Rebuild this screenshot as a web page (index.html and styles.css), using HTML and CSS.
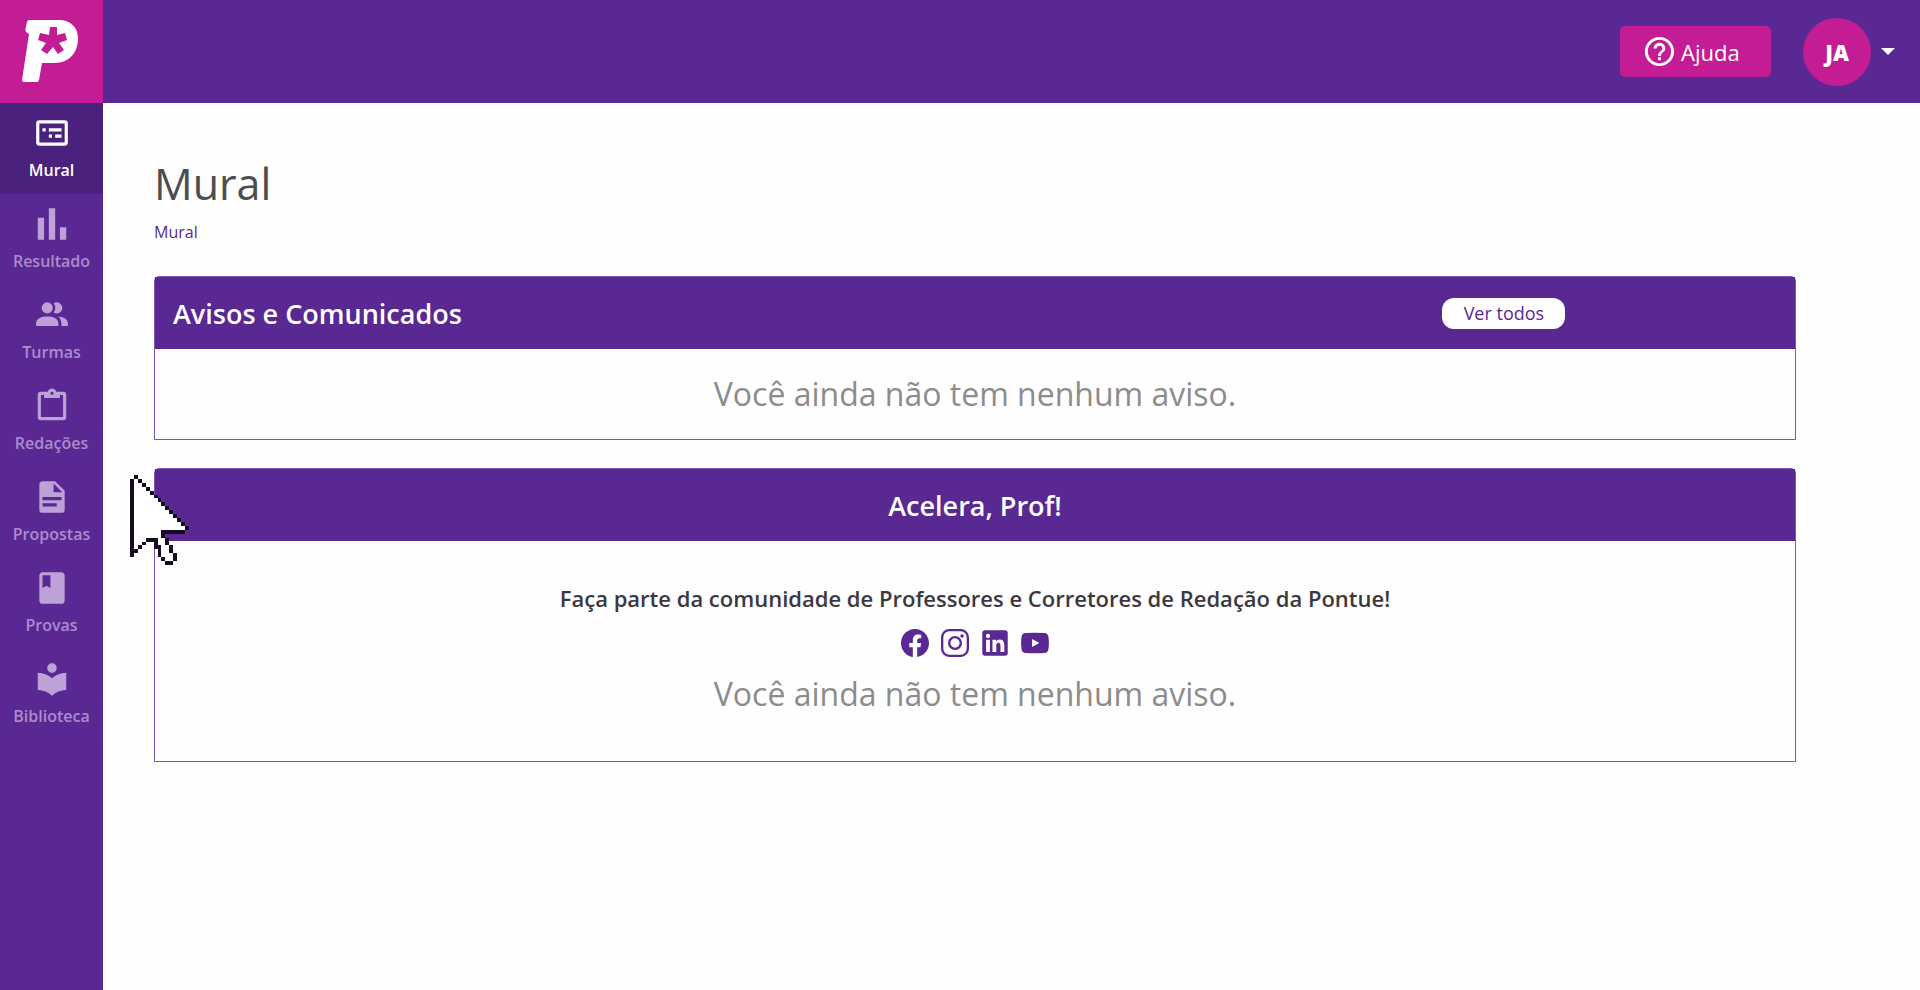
FILE: index.html
```html
<!DOCTYPE html>
<html lang="pt-BR">
<head>
<meta charset="UTF-8">
<meta name="viewport" content="width=device-width, initial-scale=1.0">
<title>Pontue - Mural</title>
<link rel="stylesheet" href="styles.css">
</head>
<body>

<aside class="sidebar">
    <a class="logo" href="#" aria-label="Pontue">
        <svg viewBox="0 0 75 80" aria-hidden="true">
            <path fill="#fff" d="M15 10H45C56 10 64 17 64 28C64 42 56 53 40 53H28L25 70Q24.500 72 23 72H10Q8 72 8 70L15 24L12 22Q11 21 11.500 19L13 12Q13.500 10 15 10Z"/>
            <path fill="#c41c94" d="M36 17H43V25L51 23L53 30L45 33L50 40L44 44L39 37L33 44L27 40L32 33L24 30L26 23L35 25Z"/>
        </svg>
    </a>
    <nav class="menu">
        <a class="menu-item active" href="#mural">
            <svg viewBox="0 0 24 24"><path d="M20 4H4a2 2 0 0 0-2 2v12a2 2 0 0 0 2 2h16a2 2 0 0 0 2-2V6a2 2 0 0 0-2-2m0 14H4V6h16v12M6 9h2v2H6V9m4 0h8v2h-8V9m0 4h2v2h-2v-2m4 0h4v2h-4v-2z"/></svg>
            <span>Mural</span>
        </a>
        <a class="menu-item" href="#resultado">
            <svg viewBox="0 0 24 24"><path d="M3 22V8h4v14H3M10 22V2h4v20h-4M17 22v-8h4v8h-4z"/></svg>
            <span>Resultado</span>
        </a>
        <a class="menu-item" href="#turmas">
            <svg viewBox="0 0 24 24"><path d="M16 17v2H2v-2s0-4 7-4 7 4 7 4m-3.500-9.500A3.500 3.500 0 1 0 9 11a3.500 3.500 0 0 0 3.500-3.500m3.440 5.500A5.320 5.320 0 0 1 18 17v2h4v-2s0-3.630-6.060-4M15 4a3.390 3.390 0 0 0-1.930.590 5 5 0 0 1 0 5.820A3.390 3.390 0 0 0 15 11a3.500 3.500 0 0 0 0-7z"/></svg>
            <span>Turmas</span>
        </a>
        <a class="menu-item" href="#redacoes">
            <svg viewBox="0 0 24 24"><path d="M19 3h-4.180C14.400 1.840 13.300 1 12 1s-2.400.840-2.820 2H5a2 2 0 0 0-2 2v14a2 2 0 0 0 2 2h14a2 2 0 0 0 2-2V5a2 2 0 0 0-2-2m-7 0a1 1 0 0 1 1 1 1 1 0 0 1-1 1 1 1 0 0 1-1-1 1 1 0 0 1 1-1M7 7h10V5h2v14H5V5h2v2z"/></svg>
            <span>Redações</span>
        </a>
        <a class="menu-item" href="#propostas">
            <svg viewBox="0 0 24 24"><path d="M13 9h5.500L13 3.500V9M6 2h8l6 6v12a2 2 0 0 1-2 2H6a2 2 0 0 1-2-2V4c0-1.110.890-2 2-2m9 16v-2H6v2h9m3-4v-2H6v2h12z"/></svg>
            <span>Propostas</span>
        </a>
        <a class="menu-item" href="#provas">
            <svg viewBox="0 0 24 24"><path d="M18 2H6c-1.100 0-2 .900-2 2v16c0 1.100.900 2 2 2h12c1.100 0 2-.900 2-2V4c0-1.100-.900-2-2-2zM6 4h5v8l-2.500-1.500L6 12V4z"/></svg>
            <span>Provas</span>
        </a>
        <a class="menu-item" href="#biblioteca">
            <svg viewBox="0 0 24 24"><path d="M12 11.550C9.640 9.350 6.480 8 3 8v11c3.480 0 6.640 1.350 9 3.550 2.360-2.190 5.520-3.550 9-3.550V8c-3.480 0-6.640 1.350-9 3.550zM12 8c1.660 0 3-1.340 3-3s-1.340-3-3-3-3 1.340-3 3 1.340 3 3 3z"/></svg>
            <span>Biblioteca</span>
        </a>
    </nav>
</aside>

<div class="page">
    <header class="top-bar">
        <button class="help-button" type="button">
            <svg viewBox="0 0 24 24" aria-hidden="true"><path d="M11 18h2v-2h-2v2zm1-16C6.480 2 2 6.480 2 12s4.480 10 10 10 10-4.480 10-10S17.520 2 12 2zm0 18c-4.410 0-8-3.590-8-8s3.590-8 8-8 8 3.590 8 8-3.590 8-8 8zm0-14c-2.210 0-4 1.790-4 4h2c0-1.100.900-2 2-2s2 .900 2 2c0 2-3 1.750-3 5h2c0-2.250 3-2.500 3-5 0-2.210-1.790-4-4-4z"/></svg>
            <span>Ajuda</span>
        </button>
        <button class="user-button" type="button">
            <span class="avatar">JA</span>
            <span class="caret"></span>
        </button>
    </header>

    <main class="content">
        <h1>Mural</h1>
        <a class="breadcrumb" href="#mural">Mural</a>

        <section class="card">
            <div class="card-header">
                <h2>Avisos e Comunicados</h2>
                <button class="see-all" type="button">Ver todos</button>
            </div>
            <div class="card-body">
                <p class="empty">Você ainda não tem nenhum aviso.</p>
            </div>
        </section>

        <section class="card">
            <div class="card-header centered">
                <h2>Acelera, Prof!</h2>
            </div>
            <div class="card-body community">
                <p class="invite">Faça parte da comunidade de Professores e Corretores de Redação da Pontue!</p>
                <div class="social">
                    <a href="#" aria-label="Facebook">
                        <svg viewBox="0 0 16 16"><path d="M16 8.049c0-4.446-3.582-8.050-8-8.050C3.580 0-.002 3.603-.002 8.050c0 4.017 2.926 7.347 6.750 7.951v-5.625h-2.030V8.050H6.750V6.275c0-2.017 1.195-3.131 3.022-3.131.876 0 1.791.157 1.791.157v1.980h-1.009c-.993 0-1.303.621-1.303 1.258v1.510h2.218l-.354 2.326H9.250V16c3.824-.604 6.750-3.934 6.750-7.951z"/></svg>
                    </a>
                    <a href="#" aria-label="Instagram">
                        <svg viewBox="0 0 24 24"><rect x="1" y="1" width="22" height="22" rx="6" fill="none" stroke="#592893" stroke-width="2"/><circle cx="12" cy="12" r="5" fill="none" stroke="#592893" stroke-width="2"/><circle cx="18" cy="6" r="1.500"/></svg>
                    </a>
                    <a href="#" aria-label="LinkedIn">
                        <svg viewBox="1 1 22 22"><path d="M20 2H4C2.900 2 2 2.900 2 4v16c0 1.100.900 2 2 2h16c1.100 0 2-.900 2-2V4c0-1.100-.900-2-2-2zM8 19H5V9.500h3V19zM6.500 8.200a1.700 1.700 0 1 1 0-3.400 1.700 1.700 0 0 1 0 3.400zM19.300 19h-3v-5c0-1.400-.500-2.100-1.500-2.100-1.100 0-1.800.800-1.800 2.100v5h-3V9.500h2.900v1.300c.500-.900 1.400-1.600 2.800-1.600 2.300 0 3.600 1.400 3.600 4.100V19z"/></svg>
                    </a>
                    <a href="#" aria-label="YouTube">
                        <svg viewBox="0 0 24 24"><path d="M4 3.500Q12 3 20 3.500Q23 3.700 23.500 6.500Q24.300 12 23.500 17.500Q23 20.300 20 20.500Q12 21 4 20.500Q1 20.300.500 17.500Q-.300 12 .500 6.500Q1 3.700 4 3.500zM9.500 8.500v7l6.200-3.500z"/></svg>
                    </a>
                </div>
                <p class="empty">Você ainda não tem nenhum aviso.</p>
            </div>
        </section>
    </main>
</div>

<svg class="cursor" viewBox="0 0 15 23" shape-rendering="crispEdges" aria-hidden="true">
    <path fill="#fff" d="M1 0H2V1H3V2H4V3H5V4H6V5H7V6H8V7H9V8H10V9H11V10H12V11H13V12H14V13H15V14H9V16H10V18H11V20H12V22H8V21H7V18H6V16H4V17H3V18H2V19H1V20H0V1H1Z"/>
    <path fill="#160a26" d="M0 1h1v20H0zM1 0h1v1H1zM2 1h1v1H2zM3 2h1v1H3zM4 3h1v1H4zM5 4h1v1H5zM6 5h1v1H6zM7 6h1v1H7zM8 7h1v1H8zM9 8h1v1H9zM10 9h1v1h-1zM11 10h1v1h-1zM12 11h1v1h-1zM13 12h1v1h-1zM14 13h1v1h-1zM8 14h6v1H8zM8 15h1v1H8zM9 16h1v2H9zM10 18h1v2h-1zM11 20h1v2h-1zM9 22h2v1H9zM8 21h1v1H8zM7 18h1v3H7zM6 16h1v3H6zM4 16h2v1H4zM3 17h1v1H3zM2 18h1v1H2zM1 19h1v1H1z"/>
</svg>

</body>
</html>
```
FILE: styles.css
```css
* {
    box-sizing: border-box;
}

body {
    display: flex;
    min-height: 100vh;
    margin: 0;
    font-family: "Open Sans", "Noto Sans", sans-serif;
    background-color: #fefefe;
}

h1, h2, p {
    margin: 0;
}

a {
    color: #592893;
    text-decoration: none;
}

button {
    border: none;
    font-family: inherit;
    cursor: pointer;
}

.sidebar {
    flex: none;
    width: 103px;
    background-color: #592893;
}

.logo {
    display: flex;
    align-items: center;
    justify-content: center;
    height: 103px;
    padding-bottom: 3px;
    background-color: #c41c94;
}

.logo svg {
    width: 75px;
    height: 80px;
}

.menu-item {
    display: flex;
    flex-direction: column;
    align-items: center;
    gap: 6px;
    height: 91px;
    padding-top: 11px;
    color: #ac8bcc;
    font-size: 16px;
    font-weight: 600;
    line-height: 24px;
}

.menu-item svg {
    width: 38px;
    height: 38px;
    fill: #bda2d8;
}

.menu-item.active {
    background-color: #4a217c;
    color: #fff;
}

.menu-item.active svg {
    fill: #fff;
}

.page {
    flex: 1;
    min-width: 0;
}

.top-bar {
    display: flex;
    align-items: center;
    justify-content: flex-end;
    gap: 32px;
    height: 103px;
    padding-right: 25px;
    background-color: #592893;
}

.help-button {
    display: flex;
    align-items: center;
    gap: 4px;
    width: 151px;
    height: 51px;
    padding: 0 22px;
    border-radius: 5px;
    background-color: #c41c94;
    color: #fff;
    font-size: 22px;
}

.help-button svg {
    width: 35px;
    height: 35px;
    fill: #fff;
}

.user-button {
    display: flex;
    align-items: center;
    gap: 10px;
    padding: 0;
    background: none;
}

.avatar {
    display: flex;
    align-items: center;
    justify-content: center;
    width: 68px;
    height: 68px;
    border-radius: 50%;
    background-color: #c41c94;
    color: #fff;
    font-size: 22px;
    font-weight: 800;
}

.caret {
    border-top: 7px solid #fff;
    border-left: 7px solid transparent;
    border-right: 7px solid transparent;
}

.content {
    padding: 51px 124px 51px 51px;
}

h1 {
    color: #4d4d4f;
    font-size: 43px;
    font-weight: 400;
    line-height: 60px;
}

.breadcrumb {
    display: block;
    margin-bottom: 30px;
    padding-top: 4px;
    font-size: 16px;
    line-height: 28px;
}

.card {
    margin-bottom: 28px;
    border: 1px solid #7d55b0;
    border-radius: 5px 5px 0 0;
}

.card-header {
    display: flex;
    align-items: center;
    justify-content: space-between;
    height: 72px;
    background-color: #592893;
    color: #fff;
}

.card-header.centered {
    justify-content: center;
}

h2 {
    padding: 0 18px;
    font-size: 27px;
    font-weight: 600;
}

.see-all {
    width: 123px;
    height: 31px;
    margin-right: 14%;
    padding: 0;
    border-radius: 12px;
    background-color: #fff;
    color: #592893;
    font-size: 18px;
}

.card-body {
    padding: 20px;
    text-align: center;
}

.community {
    padding: 42px 20px;
}

.empty {
    color: #8c8c8c;
    font-size: 32px;
    line-height: 50px;
}

.invite {
    color: #3b3842;
    font-size: 22px;
    font-weight: 600;
    line-height: 30px;
}

.social {
    display: flex;
    justify-content: center;
    gap: 12px;
    padding: 16px 0 12px;
}

.social svg {
    display: block;
    width: 28px;
    height: 28px;
    fill: #592893;
}

/* mouse pointer floating over the page */
.cursor {
    position: absolute;
    top: 475px;
    left: 130px;
    width: 59px;
    height: 90px;
}
```
